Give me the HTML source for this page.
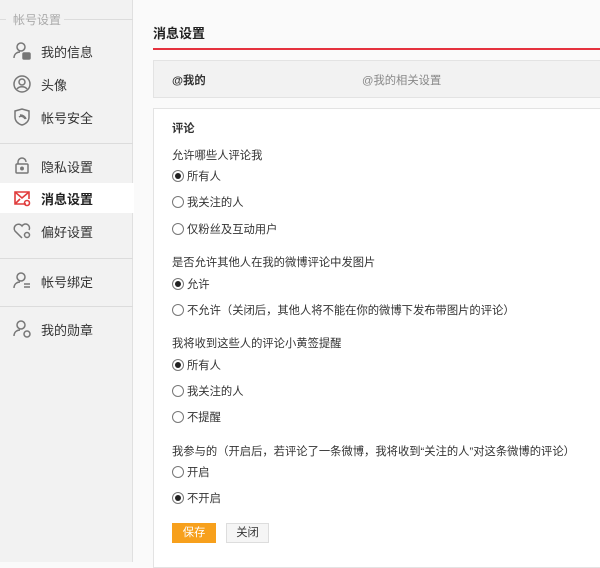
<!DOCTYPE html>
<html><head><meta charset="utf-8"><style>
*{margin:0;padding:0;box-sizing:border-box}
body{width:600px;height:562px;overflow:hidden;background:#fafafa;font-family:"Liberation Sans","Noto Sans CJK SC",sans-serif;font-size:11.3px;color:#333;position:relative}
.a{position:absolute;white-space:nowrap}
#side{position:absolute;left:0;top:0;width:133px;height:562px;background:#f2f2f2;border-right:1px solid #e0e0e0;font-size:12px}
.hr{position:absolute;left:0;width:133px;height:1px;background:#dcdcdc}
.it{position:absolute;left:0;width:133px;height:30px;font-size:13px;color:#333}
.it span{position:absolute;left:41px;top:6px}
.it svg{position:absolute;left:12px;top:5px}
.r{position:absolute;width:12px;height:12px;border:1px solid #777;border-radius:50%;background:#fff}
.r.on::after{content:"";position:absolute;left:2px;top:2px;width:6px;height:6px;border-radius:50%;background:#222}
</style></head><body>
<div id="side">
<div class="a" style="left:13px;top:11px;color:#aaa;font-size:12px">帐号设置</div>
<div class="hr" style="top:19px;left:64px;width:69px"></div>
<div class="hr" style="top:19px;left:0;width:6px"></div>
<div class="it" style="top:36px"><svg width="20" height="20" viewBox="0 0 20 20" fill="none" stroke="#777" stroke-width="1.5"><circle cx="9" cy="6" r="4"/><path d="M2 17c0-4 3-6 6-6"/><rect x="11" y="12" width="7" height="6" rx="1" fill="#777"/></svg><span>我的信息</span></div>
<div class="it" style="top:69px"><svg width="20" height="20" viewBox="0 0 20 20" fill="none" stroke="#777" stroke-width="1.5"><circle cx="10" cy="10" r="8"/><circle cx="10" cy="8" r="3"/><path d="M5 15c2-3 8-3 10 0"/></svg><span>头像</span></div>
<div class="it" style="top:102px"><svg width="20" height="20" viewBox="0 0 20 20" fill="none" stroke="#777" stroke-width="1.5"><path d="M3 4l7-2 7 2v6c0 4-3 7-7 8-4-1-7-4-7-8z"/><path d="M7 10a4 4 0 0 1 6 2M8 8a6 6 0 0 1 6 4"/></svg><span>帐号安全</span></div>
<div class="hr" style="top:143px"></div>
<div class="it" style="top:151px"><svg width="20" height="20" viewBox="0 0 20 20" fill="none" stroke="#777" stroke-width="1.5"><path d="M6 8V6a4 4 0 0 1 8 0"/><rect x="4" y="8" width="12" height="9" rx="1"/><circle cx="10" cy="12.5" r="1.2" fill="#777"/></svg><span>隐私设置</span></div>
<div class="it" style="top:183px;background:#fff;width:134px"><svg width="20" height="20" viewBox="0 0 20 20" fill="none" stroke="#e03c3c" stroke-width="1.6"><path d="M14 16H3V4h14v7"/><path d="M3 4l7 6 7-6M3 16l5-5"/><circle cx="15" cy="15" r="2.5"/></svg><span style="font-weight:bold;color:#222">消息设置</span></div>
<div class="it" style="top:216px"><svg width="20" height="20" viewBox="0 0 20 20" fill="none" stroke="#777" stroke-width="1.5"><path d="M10 17L3 10a4 4 0 0 1 7-5 4 4 0 0 1 7 4"/><circle cx="15" cy="14" r="2.5"/></svg><span>偏好设置</span></div>
<div class="hr" style="top:258px"></div>
<div class="it" style="top:266px"><svg width="20" height="20" viewBox="0 0 20 20" fill="none" stroke="#777" stroke-width="1.5"><circle cx="9" cy="6" r="4"/><path d="M2 17c0-4 3-6 6-6M12 13h6M12 16h6"/></svg><span>帐号绑定</span></div>
<div class="hr" style="top:306px"></div>
<div class="it" style="top:314px"><svg width="20" height="20" viewBox="0 0 20 20" fill="none" stroke="#777" stroke-width="1.5"><circle cx="9" cy="6" r="4"/><path d="M2 17c0-4 3-6 6-6"/><circle cx="15" cy="15" r="3"/></svg><span>我的勋章</span></div>
</div>

<div class="a" style="left:153px;top:23px;font-size:13px;font-weight:bold;color:#222">消息设置</div>
<div class="a" style="left:153px;top:48px;width:447px;height:2px;background:#e5323e"></div>
<div class="a" style="left:153px;top:60px;width:447px;height:38px;background:#f2f2f2;border:1px solid #e3e3e3;border-right:none"></div>
<div class="a" style="left:172px;top:72px;font-weight:bold;color:#333">@我的</div>
<div class="a" style="left:362px;top:72px;color:#888">@我的相关设置</div>
<div class="a" style="left:153px;top:108px;width:447px;height:460px;background:#fff;border:1px solid #e3e3e3;border-right:none"></div>

<div class="a" style="left:172px;top:120px;font-weight:bold">评论</div>
<div class="a" style="left:172px;top:147px">允许哪些人评论我</div>
<div class="r on" style="left:172px;top:170px"></div><div class="a" style="left:187px;top:168px">所有人</div>
<div class="r" style="left:172px;top:196px"></div><div class="a" style="left:187px;top:194px">我关注的人</div>
<div class="r" style="left:172px;top:223px"></div><div class="a" style="left:187px;top:221px">仅粉丝及互动用户</div>
<div class="a" style="left:172px;top:254px">是否允许其他人在我的微博评论中发图片</div>
<div class="r on" style="left:172px;top:278px"></div><div class="a" style="left:187px;top:276px">允许</div>
<div class="r" style="left:172px;top:304px"></div><div class="a" style="left:187px;top:302px">不允许（关闭后，其他人将不能在你的微博下发布带图片的评论）</div>
<div class="a" style="left:172px;top:335px">我将收到这些人的评论小黄签提醒</div>
<div class="r on" style="left:172px;top:359px"></div><div class="a" style="left:187px;top:357px">所有人</div>
<div class="r" style="left:172px;top:385px"></div><div class="a" style="left:187px;top:383px">我关注的人</div>
<div class="r" style="left:172px;top:411px"></div><div class="a" style="left:187px;top:409px">不提醒</div>
<div class="a" style="left:172px;top:443px">我参与的（开启后，若评论了一条微博，我将收到“关注的人”对这条微博的评论）</div>
<div class="r" style="left:172px;top:466px"></div><div class="a" style="left:187px;top:464px">开启</div>
<div class="r on" style="left:172px;top:492px"></div><div class="a" style="left:187px;top:490px">不开启</div>
<div class="a" style="left:172px;top:523px;width:44px;height:20px;background:#f7a01c;color:#fff;text-align:center;line-height:20px">保存</div>
<div class="a" style="left:226px;top:523px;width:43px;height:20px;background:#f5f5f5;border:1px solid #ddd;color:#333;text-align:center;line-height:18px">关闭</div>
</body></html>
